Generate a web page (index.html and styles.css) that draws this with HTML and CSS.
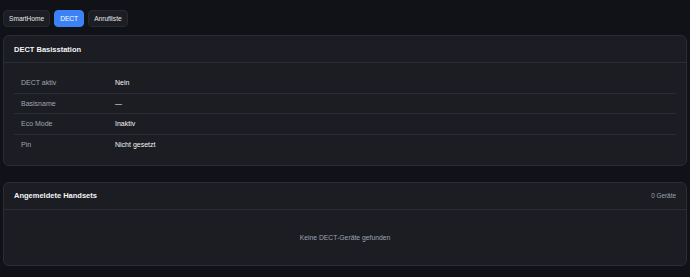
FILE: index.html
```html
<!DOCTYPE html>
<html lang="de">
<head>
  <meta charset="UTF-8">
  <title>DECT</title>
  <link rel="stylesheet" href="styles.css">
</head>
<body>
  <div class="tabs">
    <button class="tab">SmartHome</button>
    <button class="tab active">DECT</button>
    <button class="tab">Anrufliste</button>
  </div>

  <div class="card">
    <div class="card-head">
      <h2>DECT Basisstation</h2>
    </div>
    <div class="card-body">
      <table class="info">
        <tr><td class="label">DECT aktiv</td><td class="value">Nein</td></tr>
        <tr><td class="label">Basisname</td><td class="value">—</td></tr>
        <tr><td class="label">Eco Mode</td><td class="value">Inaktiv</td></tr>
        <tr><td class="label">Pin</td><td class="value">Nicht gesetzt</td></tr>
      </table>
    </div>
  </div>

  <div class="card second">
    <div class="card-head">
      <h2>Angemeldete Handsets</h2>
      <span class="count">0 Geräte</span>
    </div>
    <div class="empty">Keine DECT-Geräte gefunden</div>
  </div>
</body>
</html>
```

FILE: styles.css
```css
html, body {
  margin: 0;
  height: 100%;
}

body {
  background: #111217;
  color: #e5e7eb;
  font-family: "Liberation Sans", Arial, sans-serif;
  font-size: 7px;
  padding: 10px 3px;
  box-sizing: border-box;
  overflow: hidden;
}

.tabs {
  display: flex;
  gap: 4px;
  margin-bottom: 8px;
}

.tab {
  height: 17px;
  padding: 0 5px;
  background: #1c1e24;
  border: 1px solid #262930;
  border-radius: 4px;
  color: #e5e7eb;
  font: inherit;
  font-size: 6.6px;
}

.tab.active {
  background: #3b82f6;
  border-color: #3b82f6;
  color: #fff;
}

.card {
  background: #1b1d23;
  border: 1px solid #2a2d35;
  border-radius: 6px;
}

.card.second {
  margin-top: 16px;
}

.card-head {
  display: flex;
  justify-content: space-between;
  align-items: center;
  height: 26px;
  padding: 0 10px;
  border-bottom: 1px solid #2a2d35;
}

.card-head h2 {
  margin: 0;
  font-size: 7.5px;
  font-weight: bold;
  color: #f3f4f6;
}

.count {
  font-size: 6.4px;
  color: #9ca3af;
}

.card-body {
  padding: 10px;
}

.info {
  width: 100%;
  border-collapse: collapse;
}

.info td {
  height: 20.4px;
  padding: 0 7px;
  border-bottom: 1px solid #2a2d35;
  box-sizing: border-box;
}

.info tr:last-child td {
  border-bottom: none;
}

.info .label {
  width: 94px;
  color: #a1a6b0;
}

.info .value {
  color: #f3f4f6;
}

.empty {
  height: 55px;
  display: flex;
  align-items: center;
  justify-content: center;
  color: #9ca3af;
  font-size: 6.8px;
}
```
